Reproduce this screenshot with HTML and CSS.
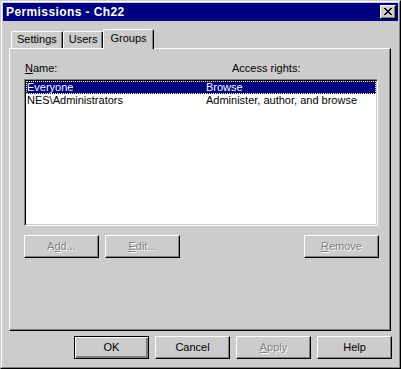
FILE: index.html
```html
<!DOCTYPE html>
<html>
<head>
  <meta charset="UTF-8">
  <title>Permissions - Ch22</title>
  <link rel="stylesheet" href="styles.css">
</head>
<body>
  <div class="window">
    <div class="frame">
      <div class="titlebar">
        <span class="title">Permissions - Ch22</span>
        <div class="close-btn">
          <svg width="8" height="7" viewBox="0 0 8 7" shape-rendering="crispEdges">
            <path d="M0 0h2v1h-2z M6 0h2v1h-2z M1 1h2v1h-2z M5 1h2v1h-2z M2 2h4v1h-4z M3 3h2v1h-2z M2 4h4v1h-4z M1 5h2v1h-2z M5 5h2v1h-2z M0 6h2v1h-2z M6 6h2v1h-2z" fill="#000"/>
          </svg>
        </div>
      </div>

      <div class="body">
        <!-- Tabs -->
        <div class="tabs">
          <div class="tab">Settings</div>
          <div class="tab">Users</div>
          <div class="tab active">Groups</div>
        </div>

        <div class="panel">
          <div class="labels">
            <span class="label-name"><u>N</u>ame:</span>
            <span class="label-rights">Access rights:</span>
          </div>

          <div class="listview">
            <div class="row selected">
              <span class="col-name">Everyone</span>
              <span class="col-rights">Browse</span>
            </div>
            <div class="row">
              <span class="col-name">NES\Administrators</span>
              <span class="col-rights">Administer, author, and browse</span>
            </div>
          </div>

          <div class="list-buttons">
            <div class="btn disabled">A<u>d</u>d...</div>
            <div class="btn disabled"><u>E</u>dit...</div>
            <div class="btn disabled push-right"><u>R</u>emove</div>
          </div>
        </div>

        <!-- Dialog buttons -->
        <div class="dialog-buttons">
          <div class="btn default">OK</div>
          <div class="btn">Cancel</div>
          <div class="btn disabled"><u>A</u>pply</div>
          <div class="btn">Help</div>
        </div>
      </div>
    </div>
  </div>
</body>
</html>
```

FILE: styles.css
```css
body {
  margin: 0;
  font-family: "Liberation Sans", Arial, sans-serif;
  font-size: 11px;
  color: #000;
  background-color: #cccccc;
}
.window {
  width: 401px;
  height: 369px;
  box-sizing: border-box;
  border: 1px solid;
  border-color: #cccccc #000 #000 #cccccc;
  background-color: #cccccc;
}
.frame {
  height: 100%;
  box-sizing: border-box;
  border: 1px solid;
  border-color: #fff #808080 #808080 #fff;
  padding: 1px;
}
.titlebar {
  height: 18px;
  background-color: #000080;
  display: flex;
  align-items: center;
  justify-content: space-between;
  padding-left: 3px;
}
.title {
  color: #fff;
  font-weight: bold;
  font-size: 12px;
  letter-spacing: 0.4px;
}
.close-btn {
  width: 16px;
  height: 14px;
  box-sizing: border-box;
  margin-right: 2px;
  background-color: #cccccc;
  border: 1px solid;
  border-color: #fff #000 #000 #fff;
  box-shadow: inset -1px -1px 0 #808080;
  display: flex;
  align-items: center;
  justify-content: center;
  padding: 0 1px 1px 0;
}
.close-btn svg {
  display: block;
}
.tabs {
  display: flex;
  align-items: flex-end;
  height: 19px;
  margin-top: 8px;
  margin-left: 8px;
  position: relative;
  z-index: 1;
}
.tab {
  height: 17px;
  box-sizing: border-box;
  padding: 0 5px;
  line-height: 15px;
  border-top: 1px solid #fff;
  border-left: 1px solid #fff;
  border-right: 1px solid #000;
  border-top-left-radius: 2px;
  border-top-right-radius: 2px;
  box-shadow: inset -1px 0 0 #808080;
  background-color: #cccccc;
}
.tab.active {
  height: 20px;
  margin-bottom: -1px;
  padding: 0 6px;
  line-height: 16px;
}
.panel {
  width: 382px;
  height: 283px;
  box-sizing: border-box;
  margin-left: 6px;
  border: 1px solid;
  border-color: #fff #000 #000 #fff;
  box-shadow: inset -1px -1px 0 #808080;
  padding: 13px 0 0 14px;
}
.labels {
  display: flex;
  height: 13px;
  line-height: 13px;
  padding-left: 1px;
}
.label-name {
  width: 207px;
}
.listview {
  width: 354px;
  height: 147px;
  box-sizing: border-box;
  margin-top: 4px;
  background-color: #fff;
  border: 1px solid;
  border-color: #808080 #fff #fff #808080;
  box-shadow: inset 1px 1px 0 #000, inset -1px -1px 0 #cccccc;
  padding: 1px;
}
.row {
  display: flex;
  height: 13px;
  line-height: 13px;
  white-space: nowrap;
}
.row.selected {
  background-color: #000080;
  color: #fff;
  outline: 1px dotted #ffff80;
  outline-offset: -1px;
}
.col-name {
  width: 180px;
  box-sizing: border-box;
  padding-left: 1px;
}
.list-buttons {
  display: flex;
  gap: 6px;
  width: 355px;
  margin-top: 9px;
}
.push-right {
  margin-left: auto;
}
.btn {
  width: 75px;
  height: 23px;
  box-sizing: border-box;
  border: 1px solid;
  border-color: #fff #000 #000 #fff;
  box-shadow: inset -1px -1px 0 #808080;
  background-color: #cccccc;
  display: flex;
  align-items: center;
  justify-content: center;
  padding-bottom: 1px;
}
.btn.disabled {
  color: #808080;
  text-shadow: 1px 1px 0 #fff;
}
.btn.default {
  border-color: #000;
  box-shadow: inset 1px 1px 0 #fff, inset -2px -2px 0 #808080;
}
.dialog-buttons {
  display: flex;
  justify-content: flex-end;
  gap: 6px;
  margin-top: 5px;
  padding-right: 6px;
}
```
